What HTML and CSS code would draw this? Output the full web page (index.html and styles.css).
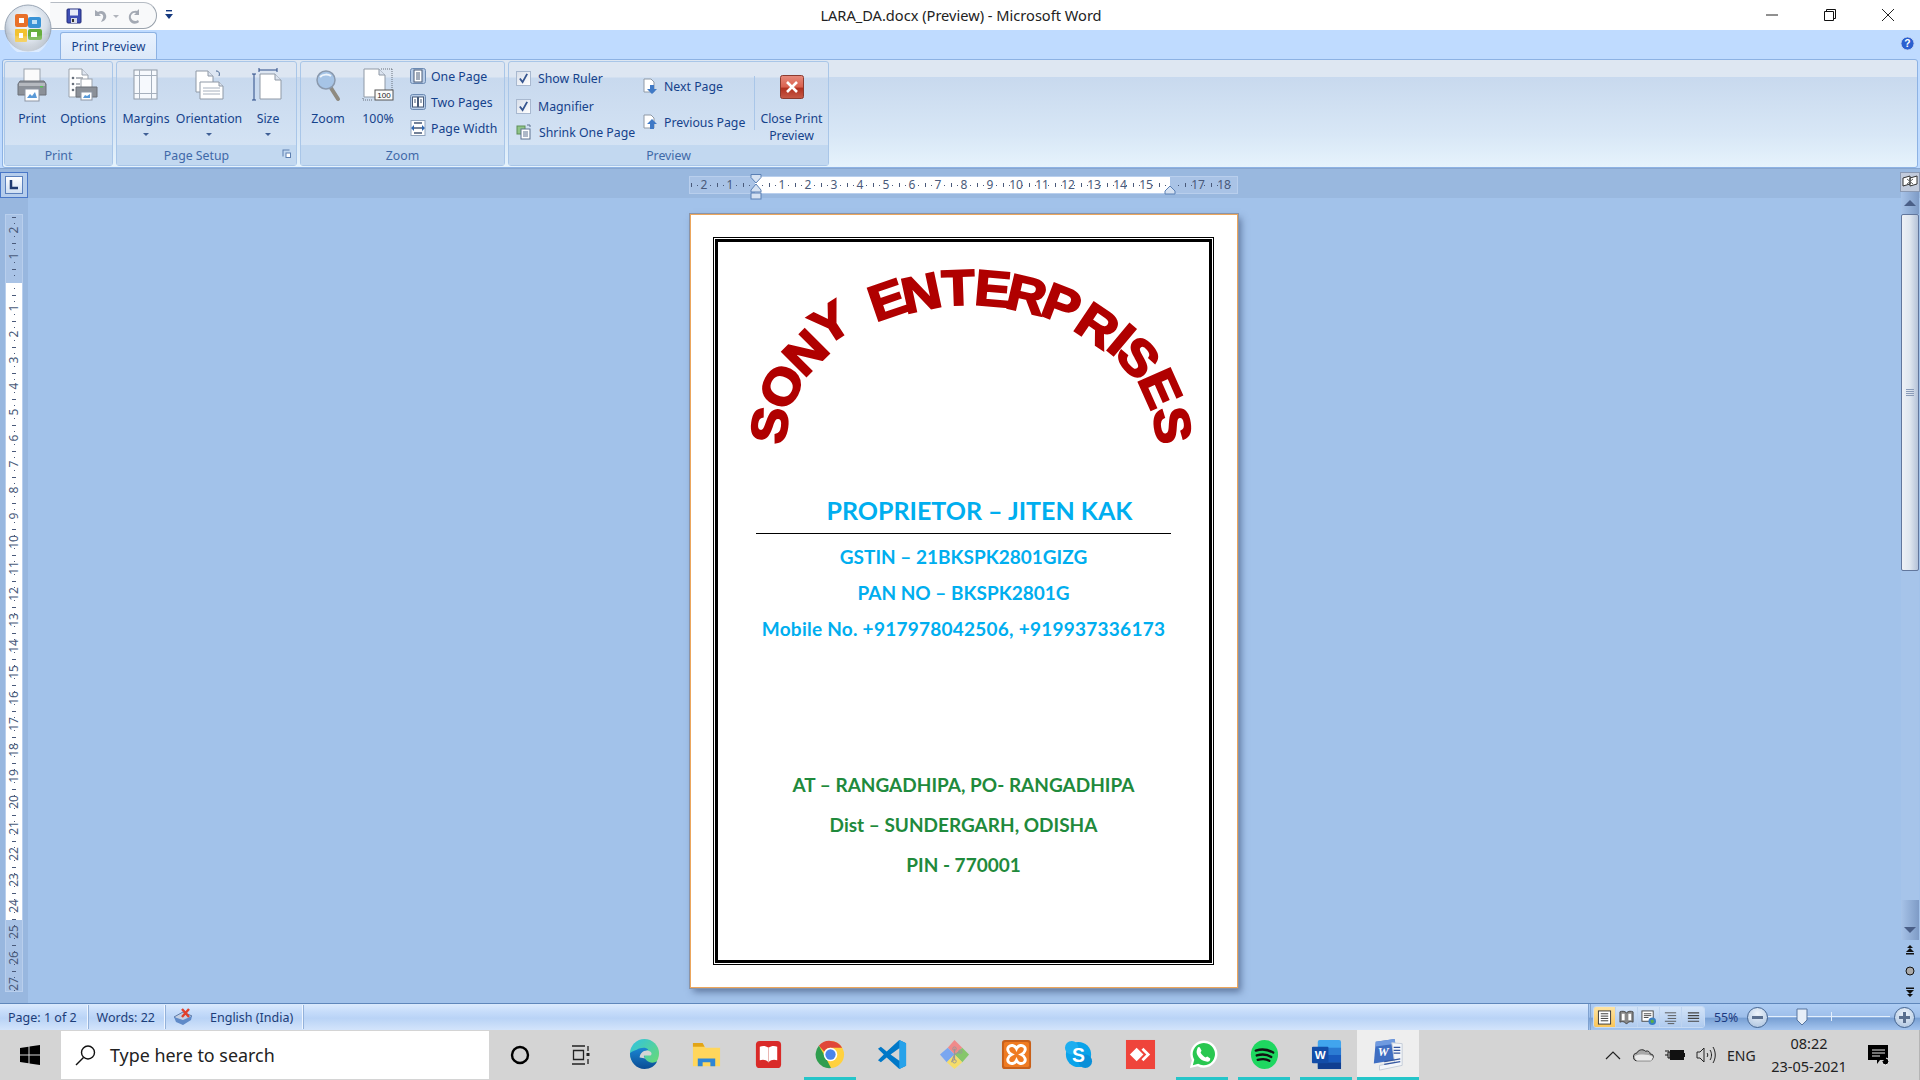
FILE: index.html
```html
<!DOCTYPE html>
<html lang="en">
<head>
<meta charset="utf-8">
<title>LARA_DA.docx (Preview) - Microsoft Word</title>
<link rel="stylesheet" href="styles.css">
</head>
<body>
<header class="titlebar">
  <div class="qat">
    <svg class="ic16" viewBox="0 0 16 16"><rect x="1" y="1" width="14" height="14" rx="1" fill="#3f4fb5" stroke="#232c7a"/><rect x="4" y="1.5" width="8" height="6" fill="#e8ecf8"/><rect x="5" y="10" width="6" height="5" fill="#d8dce8"/><rect x="6" y="11" width="2" height="3" fill="#333"/></svg>
    <svg class="ic16 undo" viewBox="0 0 16 16"><path d="M3 2v6h6L7 6c3-1 5 1 4 4l-2 4c4-1 6-4 5-7-1-4-5-5-8-3z" fill="#a3a9b3"/></svg>
    <span class="qat-drop"></span>
    <svg class="ic16 redo" viewBox="0 0 16 16"><path d="M12 1v6H7l2-2C6 4 3 7 4 10c1 3 5 4 7 2l1 2c-3 3-9 2-10-3C1 6 5 2 10 3z" fill="#a3a9b3"/></svg>
  </div>
  <svg class="qat-custom" viewBox="0 0 8 10"><rect x="1" y="0" width="6" height="1.4" fill="#15397f"/><path d="M0 4h8L4 9z" fill="#15397f"/></svg>
  <div class="doc-title">LARA_DA.docx (Preview) - Microsoft Word</div>
  <div class="winctl">
    <svg class="winbtn" viewBox="0 0 12 12"><path d="M0 6h12" stroke="#222" fill="none"/></svg>
    <svg class="winbtn" viewBox="0 0 12 12"><path d="M.5 2.5h9v9h-9zM2.5 2.5v-2h9v9h-2" stroke="#111" fill="none"/></svg>
    <svg class="winbtn" viewBox="0 0 12 12"><path d="M0 0l12 12M12 0L0 12" stroke="#222" fill="none"/></svg>
  </div>
</header>

<svg class="orb" viewBox="0 0 48 48">
  <defs>
    <radialGradient id="orbg" cx=".5" cy=".35" r=".7"><stop offset="0" stop-color="#fff"/><stop offset=".6" stop-color="#d4dde8"/><stop offset="1" stop-color="#8d99a8"/></radialGradient>
    <linearGradient id="orbgl" x1="0" y1="0" x2="0" y2="1"><stop offset="0" stop-color="#fff" stop-opacity=".1"/><stop offset="1" stop-color="#fff" stop-opacity=".55"/></linearGradient>
  </defs>
  <circle cx="24" cy="24" r="23" fill="url(#orbg)" stroke="#9aa6b5"/>
  <rect x="11" y="10" width="13" height="13" rx="2" fill="#e8702a"/>
  <rect x="24" y="13" width="13" height="11" rx="2" fill="#3a93d6"/>
  <rect x="11" y="25" width="12" height="13" rx="1" fill="#f2c230"/>
  <rect x="24" y="25" width="14" height="11" rx="2" fill="#66ae3d"/>
  <rect x="15" y="14" width="5" height="5" fill="#fff"/><rect x="27" y="28" width="6" height="5" fill="#fff"/><rect x="15" y="29" width="4" height="5" fill="#fff"/><rect x="28" y="16" width="5" height="4" fill="#bfe0f5"/>
  <path d="M3 30a21 21 0 0 0 42 0c-10 3-32 3-42 0z" fill="url(#orbgl)"/>
</svg>

<nav class="tabstrip">
  <div class="tab">Print Preview</div>
  <svg class="help" viewBox="0 0 16 16"><circle cx="8" cy="8" r="7" fill="#2a5fd0" stroke="#c8d8f4"/><text x="8" y="12" class="help-q">?</text></svg>
</nav>

<section class="ribbon">
  <div class="panel">
    <div class="group g-print">
      <div class="gbody">
        <div class="big w50">
          <svg class="ic34" viewBox="0 0 34 34"><rect x="9" y="1" width="16" height="15" fill="#fbfbfb" stroke="#9ba3ad"/><path d="M5 13h24l2 3v11H3V16z" fill="#8b9098" stroke="#6c7078"/><rect x="4" y="15" width="26" height="3" fill="#b5b9bf"/><rect x="10" y="21" width="14" height="12" fill="#fff" stroke="#8d95a3"/><path d="M12 30l3-4 2 2 3-4 2 6z" fill="#5a9ad8"/><rect x="25" y="18" width="3" height="1.500" fill="#57c057"/></svg>
          <span>Print</span>
        </div>
        <div class="big w50 w-options">
          <svg class="ic34" viewBox="0 0 34 34"><path d="M3 1h13l6 6v22H3z" fill="#fff" stroke="#9ba3ad"/><path d="M16 1v6h6" fill="#dfe6f1" stroke="#9ba3ad"/><g fill="#68707c"><circle cx="7" cy="10" r="1.300"/><circle cx="7" cy="16" r="1.300"/><circle cx="7" cy="22" r="1.300"/><rect x="10" y="9.500" width="7" height="1"/><rect x="10" y="15.500" width="4" height="1"/></g><rect x="15" y="11" width="11" height="9" fill="#fff" stroke="#9ba3ad"/><path d="M10 19h21v10H10z" fill="#8b9098" stroke="#6c7078"/><rect x="15" y="24" width="11" height="8" fill="#fff" stroke="#8d95a3"/><path d="M17 30l2-3 2 1 3-2v4z" fill="#5a9ad8"/></svg>
          <span>Options</span>
        </div>
      </div>
      <div class="glabel">Print</div>
    </div>

    <div class="group g-setup">
      <div class="gbody">
        <div class="big w-margins">
          <svg class="ic34" viewBox="0 0 34 34"><rect x="5" y="2" width="23" height="29" fill="#f6f9fd" stroke="#8f99a6"/><path d="M10.500 2v29M22.500 2v29M5 7.500h23M5 25.500h23" stroke="#a6b0bd" fill="none"/></svg>
          <span>Margins</span><i class="caret"></i>
        </div>
        <div class="big w-orient">
          <svg class="ic34" viewBox="0 0 34 34"><path d="M4 3h12l5 5v16H4z" fill="#fff" stroke="#8f99a6"/><path d="M16 3v5h5" fill="#dbe3ef" stroke="#8f99a6"/><path d="M8 14h19l4 4v13H8z" fill="#fff" stroke="#8f99a6"/><path d="M27 14v4h4" fill="#dbe3ef" stroke="#8f99a6"/><path d="M11 20h17M11 23h17M11 26h17" stroke="#a6b0bd"/><path d="M24 3c3 0 4 2 3 5" stroke="#45638f" fill="none"/></svg>
          <span>Orientation</span><i class="caret"></i>
        </div>
        <div class="big w-size">
          <svg class="ic34" viewBox="0 0 34 34"><path d="M8 2h18M8 0v4M26 0v4M3 6v26M1 6h4M1 32h4" stroke="#2b4a86" fill="none"/><path d="M9 6h15l6 6v19H9z" fill="#fff" stroke="#8f99a6"/><path d="M24 6v6h6" fill="#dbe3ef" stroke="#8f99a6"/></svg>
          <span>Size</span><i class="caret"></i>
        </div>
      </div>
      <div class="glabel glabel-setup">Page Setup<svg class="launcher" viewBox="0 0 9 9"><path d="M.5.500h7v1h-6v6h-1z" fill="#5d7fb0"/><rect x="4" y="4" width="4.500" height="4.500" fill="#fff" stroke="#5d7fb0"/></svg></div>
    </div>

    <div class="group g-zoom">
      <div class="gbody">
        <div class="big w-zoom">
          <svg class="ic34" viewBox="0 0 34 34"><path d="M20 20l7 11" stroke="#8e8a80" stroke-width="4" stroke-linecap="round"/><circle cx="15" cy="12" r="9" fill="#a6c4e6" stroke="#8a99ad" stroke-width="1.500"/><path d="M9 9c3-3 8-3 11-1" stroke="#eef5fc" stroke-width="2" fill="none"/></svg>
          <span>Zoom</span>
        </div>
        <div class="big w-100">
          <svg class="ic34" viewBox="0 0 34 34"><path d="M20 1h11M31 1v22M2 30v2h10" stroke="#68707c" stroke-dasharray="1 1" fill="none"/><path d="M3 1h15l6 6v22H3z" fill="#fff" stroke="#8f99a6"/><path d="M18 1v6h6" fill="#dbe3ef" stroke="#8f99a6"/><rect x="14" y="22" width="18" height="10" fill="#fbfbfb" stroke="#555"/><text x="23" y="30" class="hundred">100</text></svg>
          <span>100%</span>
        </div>
        <div class="smallcol">
          <div class="small"><svg class="ic16" viewBox="0 0 16 16"><rect x=".5" y=".5" width="15" height="15" rx="2" fill="#b6cbe6" stroke="#6c8ab3"/><rect x="4" y="2" width="8" height="12" fill="#fff" stroke="#475a78"/><path d="M6 5h4M6 7h4M6 9h4M6 11h4" stroke="#475a78"/></svg><span>One Page</span></div>
          <div class="small"><svg class="ic16" viewBox="0 0 16 16"><rect x=".5" y=".5" width="15" height="15" rx="2" fill="#b6cbe6" stroke="#6c8ab3"/><rect x="2.500" y="3" width="5" height="10" fill="#fff" stroke="#475a78"/><rect x="8.500" y="3" width="5" height="10" fill="#fff" stroke="#475a78"/><path d="M4 6h2M4 8h2M10 6h2M10 8h2" stroke="#475a78"/></svg><span>Two Pages</span></div>
          <div class="small"><svg class="ic16" viewBox="0 0 16 16"><rect x="1" y=".5" width="14" height="15" fill="#fff" stroke="#8fa3bd"/><path d="M4 3h8M4 13h8M4 8h8" stroke="#475a78" stroke-width="1.500"/><path d="M1 8l3-3v6zM15 8l-3-3v6z" fill="#2f66b0"/></svg><span>Page Width</span></div>
        </div>
      </div>
      <div class="glabel">Zoom</div>
    </div>

    <div class="group g-preview">
      <div class="gbody">
        <div class="checks">
          <div class="chk"><span class="box"><svg viewBox="0 0 12 12"><path d="M2 6l3 4 5-9" stroke="#36558f" stroke-width="2" fill="none"/></svg></span><span>Show Ruler</span></div>
          <div class="chk"><span class="box"><svg viewBox="0 0 12 12"><path d="M2 6l3 4 5-9" stroke="#36558f" stroke-width="2" fill="none"/></svg></span><span>Magnifier</span></div>
          <div class="chk shrink"><svg class="ic16" viewBox="0 0 16 16"><rect x="1" y="2" width="8" height="8" fill="#8fc486" stroke="#5e8d58"/><rect x="5" y="5" width="9" height="10" fill="#fff" stroke="#5f7390"/><path d="M7 8h5M7 10h5M7 12h5" stroke="#5f7390"/><path d="M11 1h3v2" stroke="#5f7390" fill="none"/></svg><span>Shrink One Page</span></div>
        </div>
        <div class="pager">
          <div class="small"><svg class="ic16" viewBox="0 0 16 16"><path d="M2 1h7l3 3v10H2z" fill="#fff" stroke="#8f99a6"/><path d="M8 7h4v4h3l-5 5-5-5h3z" fill="#3f79c6"/></svg><span>Next Page</span></div>
          <div class="small"><svg class="ic16" viewBox="0 0 16 16"><path d="M2 1h7l3 3v10H2z" fill="#fff" stroke="#8f99a6"/><path d="M10 5l5 5h-3v5H8v-5H5z" fill="#3f79c6"/></svg><span>Previous Page</span></div>
        </div>
        <div class="close">
          <svg class="closeic" viewBox="0 0 24 24"><defs><linearGradient id="cl" x1="0" y1="0" x2="0" y2="1"><stop offset="0" stop-color="#e68a7c"/><stop offset=".5" stop-color="#d9614f"/><stop offset=".55" stop-color="#b1301f"/><stop offset="1" stop-color="#c65a47"/></linearGradient></defs><rect x=".5" y=".5" width="23" height="23" rx="2" fill="url(#cl)" stroke="#8a3b30"/><path d="M7 7l10 10M17 7L7 17" stroke="#fff" stroke-width="2.600"/></svg>
          <span>Close Print<br>Preview</span>
        </div>
      </div>
      <div class="glabel">Preview</div>
    </div>
  </div>
</section>

<main class="workspace">
  <div class="topband">
    <div class="tabstop"><div class="tabstop-in"><svg viewBox="0 0 12 12"><path d="M3 1v8h7" stroke="#1e3a70" stroke-width="2.500" fill="none"/></svg></div></div>
    <div class="hruler-wrap">
      <div class="hruler">
        <span>2</span><span>1</span><span></span><span>1</span><span>2</span><span>3</span><span>4</span><span>5</span><span>6</span><span>7</span><span>8</span><span>9</span><span>10</span><span>11</span><span>12</span><span>13</span><span>14</span><span>15</span><span></span><span>17</span><span>18</span>
        <svg class="marker-l" viewBox="0 0 12 26"><path d="M1 .5h10v3L6 9 1 3.500zM6 10l5 6v2H1v-2z" fill="#d6e2f2" stroke="#5a80b5"/><rect x="1" y="19" width="10" height="6" fill="#d6e2f2" stroke="#5a80b5"/></svg>
        <svg class="marker-r" viewBox="0 0 12 10"><path d="M6 1l5 5v3H1V6z" fill="#d6e2f2" stroke="#5a80b5"/></svg>
      </div>
    </div>
    <svg class="rulerview" viewBox="0 0 20 20"><rect x=".5" y=".5" width="19" height="19" fill="#c2cbdc" stroke="#8a99b3"/><path d="M3 6l7-2v8l-7 2zM10 6l7-2v8l-7 2z" fill="#fff" stroke="#333"/><path d="M7 7l6 5M13 7l-6 5" stroke="#666"/></svg>
  </div>
  <div class="midrow">
    <div class="leftcol">
      <div class="vruler">
        <span><b>2</b></span><span><b>1</b></span><span></span><span><b>1</b></span><span><b>2</b></span><span><b>3</b></span><span><b>4</b></span><span><b>5</b></span><span><b>6</b></span><span><b>7</b></span><span><b>8</b></span><span><b>9</b></span><span><b>10</b></span><span><b>11</b></span><span><b>12</b></span><span><b>13</b></span><span><b>14</b></span><span><b>15</b></span><span><b>16</b></span><span><b>17</b></span><span><b>18</b></span><span><b>19</b></span><span><b>20</b></span><span><b>21</b></span><span><b>22</b></span><span><b>23</b></span><span><b>24</b></span><span><b>25</b></span><span><b>26</b></span><span><b>27</b></span>
      </div>
    </div>
    <div class="docarea">
      <article class="page">
        <div class="frame"><div class="frame-in">
          <svg class="wordart" viewBox="716 242 491 248">
            <text class="wa" transform="translate(767 425) rotate(-82) scale(1.08 1)" y="18">S</text>
            <text class="wa" transform="translate(779 386) rotate(-62) scale(1.08 1)" y="18">O</text>
            <text class="wa" transform="translate(803 352) rotate(-45) scale(1.08 1)" y="18">N</text>
            <text class="wa" transform="translate(828 322) rotate(-33) scale(1.08 1)" y="18">Y</text>
            <text class="wa" transform="translate(885 299) rotate(-19) scale(1.08 1)" y="18">E</text>
            <text class="wa" transform="translate(919 292) rotate(-12) scale(1.08 1)" y="18">N</text>
            <text class="wa" transform="translate(956 287) rotate(-2) scale(1.08 1)" y="18">T</text>
            <text class="wa" transform="translate(991 288) rotate(5) scale(1.08 1)" y="18">E</text>
            <text class="wa" transform="translate(1025 294) rotate(13) scale(1.08 1)" y="18">R</text>
            <text class="wa" transform="translate(1060 304) rotate(21) scale(1.08 1)" y="18">P</text>
            <text class="wa" transform="translate(1096 325) rotate(34) scale(1.08 1)" y="18">R</text>
            <text class="wa" transform="translate(1120 339) rotate(40) scale(1.08 1)" y="18">I</text>
            <text class="wa" transform="translate(1137 357) rotate(49) scale(1.08 1)" y="18">S</text>
            <text class="wa" transform="translate(1159 388) rotate(66) scale(1.08 1)" y="18">E</text>
            <text class="wa" transform="translate(1171 425) rotate(82) scale(1.08 1)" y="18">S</text>
          </svg>
          <h1 class="prop">PROPRIETOR – JITEN KAK</h1>
          <div class="rule"></div>
          <p class="cyan">GSTIN – 21BKSPK2801GIZG</p>
          <p class="cyan">PAN NO – BKSPK2801G</p>
          <p class="cyan cyan-wide">Mobile No. +917978042506, +919937336173</p>
          <div class="green-block">
            <p class="green">AT – RANGADHIPA, PO- RANGADHIPA</p>
            <p class="green">Dist – SUNDERGARH, ODISHA</p>
            <p class="green">PIN - 770001</p>
          </div>
        </div></div>
      </article>
    </div>
    <div class="scrollbar">
      <div class="sb-btn sb-up"><i class="tri-up"></i></div>
      <div class="sb-thumb"><i></i></div>
      <div class="sb-track"></div>
      <div class="sb-btn sb-down"><i class="tri-down"></i></div>
      <div class="sb-nav">
        <svg viewBox="0 0 10 10"><path d="M5 0l3 3H2zM5 3l4 4H1zM1 8h8v1.500H1z" fill="#111"/></svg>
        <svg viewBox="0 0 10 10"><circle cx="5" cy="5" r="4" fill="#aaa" stroke="#111"/></svg>
        <svg viewBox="0 0 10 10"><path d="M1 .5h8V2H1zM1 3h8L5 7zM2 7h6l-3 3z" fill="#111"/></svg>
      </div>
    </div>
  </div>
</main>

<footer class="statusbar">
  <div class="st-left">
    <span class="st">Page: 1 of 2</span>
    <span class="st">Words: 22</span>
    <span class="st st-lang">
      <svg class="proof" viewBox="0 0 22 18"><path d="M2 9l9-5 9 4-9 8z" fill="#c4cfe2" stroke="#5f7ba8"/><path d="M2 9l9 3 9-4-1 4-8 5-7-3z" fill="#5f8ac8"/><path d="M10 1l7 8M17 1l-7 8" stroke="#e0402a" stroke-width="2.400"/></svg>
      <span>English (India)</span>
    </span>
  </div>
  <div class="st-right">
    <div class="views">
      <span class="vb on"><svg viewBox="0 0 16 16"><rect x="1.500" y="1" width="13" height="14" fill="#fff" stroke="#333"/><path d="M4 4h8M4 6.500h8M4 9h8M4 11.500h8" stroke="#333"/></svg></span>
      <span class="vb"><svg viewBox="0 0 16 16"><path d="M8 3C6 1 3 1 1 2v11c2-1 5-1 7 2 2-3 5-3 7-2V2c-2-1-5-1-7 1z" fill="#888" stroke="#444"/><path d="M3 4h3v7H3zM10 4h3v7h-3z" fill="#fff"/></svg></span>
      <span class="vb"><svg viewBox="0 0 16 16"><rect x="1" y="1" width="12" height="11" fill="#fff" stroke="#444"/><path d="M3 4h8M3 6h8M3 8h5" stroke="#444"/><circle cx="12" cy="12" r="4" fill="#3b7fc4"/><path d="M10 11l3-1 1 3-3 1z" fill="#5cae45"/></svg></span>
      <span class="vb"><svg viewBox="0 0 16 16"><path d="M2 3h12M5 6h9M5 9h9M2 12h12M5 14.500h7" stroke="#555" fill="none"/></svg></span>
      <span class="vb"><svg viewBox="0 0 16 16"><path d="M2 3h12M2 6h12M2 9h12M2 12h12" stroke="#444" stroke-width="1.300" fill="none"/></svg></span>
    </div>
    <span class="pct">55%</span>
    <span class="zbtn"><i class="zminus"></i></span>
    <div class="slider"><i class="midtick"></i><svg class="thumb" viewBox="0 0 12 18"><path d="M1 1h10v11l-5 5-5-5z" fill="#e6eef8" stroke="#56759f"/></svg></div>
    <span class="zbtn"><i class="zminus"></i><i class="zplus"></i></span>
  </div>
</footer>

<footer class="taskbar">
  <div class="startbtn"><svg class="win" viewBox="0 0 20 20"><path d="M0 3l8.500-1.200V9.500H0zM9.500 1.600L20 0v9.500H9.500zM0 10.500h8.500v7.700L0 17zM9.500 10.500H20V20L9.500 18.400z" fill="#000"/></svg></div>
  <div class="search">
    <svg class="searchic" viewBox="0 0 22 22"><circle cx="13" cy="8.500" r="6.500" fill="none" stroke="#111" stroke-width="1.400"/><path d="M8.500 13.500L1 21" stroke="#111" stroke-width="1.400"/></svg>
    <span>Type here to search</span>
  </div>
  <div class="cell"><svg class="i20" viewBox="0 0 20 20"><circle cx="10" cy="10" r="8" fill="none" stroke="#000" stroke-width="2.400"/></svg></div>
  <div class="cell cell-tv"><svg class="i20" viewBox="0 0 20 20"><path d="M2 1h13M2 19h13M3.500 5.500h10v9h-10z" stroke="#222" fill="none" stroke-width="1.300"/><path d="M18 1v5M18 14v5" stroke="#222" stroke-width="1.300"/><rect x="16.500" y="8" width="3" height="3" fill="#222"/></svg></div>

  <div class="cell"><svg class="i32" viewBox="0 0 32 32"><defs><linearGradient id="edge1" x1="0" y1="0" x2="1" y2="1"><stop offset="0" stop-color="#2fc2e3"/><stop offset="1" stop-color="#6fdd68"/></linearGradient><linearGradient id="edge2" x1="0" y1="0" x2="0" y2="1"><stop offset="0" stop-color="#1a86d2"/><stop offset="1" stop-color="#0b4c94"/></linearGradient></defs><circle cx="16" cy="15" r="15" fill="url(#edge1)"/><path d="M1 15c0 9 7 16 15 16 6 0 11-3 13-8-3 2-8 2-11-1-2-2-3-4-2-7 1-3 4-4 4-4-3-3-8-2-12 0-4 1-7 3-7 4z" fill="url(#edge2)"/><path d="M11 19c0-4 4-8 9-7 4 1 4 4 2 5h-6c-1 0-1 2 1 3z" fill="#d4d4d4"/></svg></div>
  <div class="cell"><svg class="i32" viewBox="0 0 32 32"><path d="M2 5h10l3 4h15v19H2z" fill="#ffd65c"/><path d="M2 4h10l2 4H2z" fill="#e2a416"/><path d="M7 28v-8h18v8h-5v-4h-8v4z" fill="#2e86d6"/></svg></div>
  <div class="cell"><svg class="i32" viewBox="0 0 32 32"><rect x="3" y="2" width="26" height="28" rx="4" fill="#d92a28"/><path d="M16 9c-3-2-6-2-9-1v14c3-1 6-1 9 2 3-3 6-3 9-2V8c-3-1-6-1-9 1z" fill="#fff"/><path d="M16 9v15" stroke="#e8b4b0"/></svg></div>
  <div class="cell cell-on"><svg class="i32" viewBox="0 0 32 32"><circle cx="16" cy="16" r="14" fill="#ffd13e"/><path d="M16 2a14 14 0 0 1 12 7H16a7 7 0 0 0-6.500 4L4 7a14 14 0 0 1 12-5z" fill="#e0463a"/><path d="M4 7l6.500 11L16.500 30A14 14 0 0 1 4 7z" fill="#2f9e4f"/><circle cx="16" cy="16" r="7" fill="#fff"/><circle cx="16" cy="16" r="5.300" fill="#4b84ea"/></svg></div>
  <div class="cell"><svg class="i32" viewBox="0 0 32 32"><path d="M23 1l7 3.500v23L23 31 10 19l-6 5-3-2 6-6-6-6 3-2 6 5z" fill="#0078c8"/><path d="M23 1l7 3.500v23L23 31z" fill="#27a2ea"/><path d="M23 9.500L14 16l9 6.500z" fill="#d4d4d4"/></svg></div>
  <div class="cell"><svg class="i32" viewBox="0 0 32 32"><path d="M16 1l8 8-8 7-7-7z" fill="#f08a8a"/><path d="M24 9l7 7-7 8-8-8z" fill="#86c66a"/><path d="M9 9l7 7-8 8-7-8z" fill="#7aa6f0"/><path d="M8 24l8-8 8 8-8 7z" fill="#f5dd6a"/><path d="M16 10v12M16 16l6-3M16 16l-3 8" stroke="#999" fill="none" stroke-width="1.200"/><circle cx="16" cy="10" r="1.800" fill="none" stroke="#999"/><circle cx="22" cy="13" r="1.800" fill="none" stroke="#999"/><circle cx="16" cy="23" r="1.800" fill="none" stroke="#999"/></svg></div>
  <div class="cell"><svg class="i32" viewBox="0 0 32 32"><rect x="1" y="1" width="30" height="30" rx="3" fill="#c8601a"/><rect x="3" y="3" width="26" height="26" rx="2" fill="#ef7b22"/><path d="M8 8c2-2 6-2 8 2 2-4 6-4 8-2s1 6-3 8c4 2 5 6 3 8s-6 2-8-2c-2 4-6 4-8 2s-1-6 3-8c-4-2-5-6-3-8z" fill="none" stroke="#fff" stroke-width="3"/></svg></div>
  <div class="cell"><svg class="i32" viewBox="0 0 32 32"><circle cx="16" cy="16" r="13" fill="#0aa3ea"/><circle cx="9" cy="9" r="7" fill="#1daef0"/><circle cx="23" cy="23" r="7" fill="#0a8fd8"/><text x="16" y="24" class="skype-s">S</text></svg></div>
  <div class="cell"><svg class="i32" viewBox="0 0 32 32"><rect x="1" y="1" width="30" height="30" fill="#ef443b"/><path d="M12 9l7 7-7 7-7-7z" fill="#fff"/><path d="M19 9l7 7-7 7-2-2 5-5-5-5z" fill="#fff"/></svg></div>
  <div class="cell cell-on"><svg class="i32" viewBox="0 0 32 32"><path d="M3 30l2-8a14 14 0 1 1 6 6z" fill="#fff"/><path d="M6 27l1.500-5.500a11.500 11.500 0 1 1 4 4z" fill="#29c750"/><path d="M11 9c1-1 2-1 3 1l1 2-1 2c1 2 3 4 5 5l2-1 3 2c0 3-2 4-5 3-5-1-10-7-9-11z" fill="#fff"/></svg></div>
  <div class="cell cell-on"><svg class="i32" viewBox="0 0 32 32"><ellipse cx="16" cy="16" rx="14" ry="15" fill="#1ed760"/><path d="M7 12c6-2 13-1 18 2M8 17c5-1.500 11-1 15 1.500M9 21.500c4-1 9-1 12 1" stroke="#111" stroke-width="2.400" fill="none" stroke-linecap="round"/></svg></div>
  <div class="cell cell-on"><svg class="i32" viewBox="0 0 32 32"><rect x="7" y="1" width="24" height="30" rx="2" fill="#41a5ee"/><rect x="7" y="9" width="24" height="7.500" fill="#2b7cd3"/><rect x="7" y="16.500" width="24" height="7.500" fill="#185abd"/><rect x="7" y="24" width="24" height="7" fill="#103f91"/><rect x="1" y="8" width="17" height="17" rx="1" fill="#134da8"/><text x="9.500" y="21" class="word-w">W</text></svg></div>
  <div class="cell cell-on cell-active"><svg class="i36" viewBox="0 0 36 36"><path d="M5 4l20-3 2 22-24 4z" fill="#3f6ec2"/><path d="M5 4l20-3 1 5-21 3z" fill="#6f9ae0"/><text x="13" y="19" class="w07">W</text><path d="M22 5l11 1v23l-24 5v-5l16-3z" fill="#f4f6fa" stroke="#c4ccd8"/><path d="M24 10h7M24 13h7M24 16h7M14 25l17-3M14 28l17-3" stroke="#3557a0" stroke-width="1.300"/></svg></div>

  <div class="tray">
    <svg class="tr16" viewBox="0 0 16 10"><path d="M1 9l7-7 7 7" stroke="#222" fill="none" stroke-width="1.200"/></svg>
    <svg class="tr22" viewBox="0 0 22 14"><path d="M5 13a4 4 0 0 1-1-8c1-3 6-5 9-2 3-1 5 1 5 3 3 0 4 2 3 4-1 2-2 3-3 3z" fill="#a8a8a8" stroke="#222"/><path d="M2 8c5-2 14-2 19 1-1 3-2 4-3 4H5C3 13 2 11 2 8z" fill="#e8e8e8"/></svg>
    <svg class="tr20" viewBox="0 0 20 14"><path d="M0 7h3M3 4h2v6H3zM1 4V2M3 4V2" stroke="#111" fill="none"/><rect x="5.500" y="2.500" width="13" height="9" fill="#111" stroke="#111"/><rect x="18.500" y="5" width="1.500" height="4" fill="#111"/></svg>
    <svg class="tr20 tr-vol" viewBox="0 0 20 18"><path d="M1 6h3l4-4v14l-4-4H1z" fill="none" stroke="#222"/><path d="M11 7c1 1 1 3 0 4M14 4c2 3 2 7 0 10M17 1c3 5 3 11 0 16" fill="none" stroke="#222"/></svg>
    <span class="eng">ENG</span>
    <div class="clock"><span>08:22</span><span>23-05-2021</span></div>
    <svg class="notif" viewBox="0 0 22 22"><path d="M1 1h20v15h-8l-3 4v-4H1z" fill="#000"/><path d="M5 6h13M5 9h13M5 12h8" stroke="#e8e8e8"/><path d="M19 14a3.500 3.500 0 1 1-4 4" stroke="#fff" fill="#000"/></svg>
  </div>
</footer>
</body>
</html>
```
FILE: styles.css
```css
* { box-sizing: border-box; }
html, body { margin: 0; padding: 0; }
body {
  width: 1920px;
  height: 1080px;
  overflow: hidden;
  display: flex;
  flex-direction: column;
  font-family: "Noto Sans", "Open Sans", sans-serif;
  position: relative;
  background: #a2c2ea;
}
svg { display: block; flex: none; }

/* title bar */
.titlebar {
  height: 30px;
  background: #fff;
  display: flex;
  align-items: center;
  flex: none;
  position: relative;
}
.qat {
  width: 107px;
  height: 27px;
  margin: 1px 0 0 50px;
  border: 1px solid #9aa3ad;
  border-left-color: transparent;
  border-top-color: #b6bcc4;
  border-radius: 0 14px 14px 0;
  background: #f8f9fa;
  display: flex;
  align-items: center;
  padding-left: 15px;
}
.ic16 { width: 16px; height: 16px; }
.undo { margin-left: 10px; }
.qat-drop { width: 0; height: 0; border: 3px solid transparent; border-top: 3px solid #b0b4bb; border-bottom: 0; margin: 1px 6px 0 5px; }
.redo { margin-left: 2px; }
.qat-custom { width: 8px; height: 10px; margin: 0 0 0 8px; }
.doc-title {
  position: absolute;
  left: 0;
  right: 0;
  top: 5px;
  padding-left: 2px;
  text-align: center;
  font-size: 14.600px;
  line-height: 20px;
  color: #222;
}
.winctl { margin-left: auto; display: flex; align-items: center; gap: 46px; padding-right: 26px; }
.winbtn { width: 12px; height: 12px; }
.orb { position: absolute; left: 4px; top: 4px; width: 48px; height: 48px; z-index: 3; }

/* tabs */
.tabstrip {
  height: 28px;
  flex: none;
  background: #bfdbff;
  display: flex;
  align-items: flex-end;
  padding-left: 60px;
  position: relative;
}
.tab {
  width: 97px;
  height: 27px;
  border: 1px solid #8db2e3;
  border-bottom: 0;
  border-radius: 3px 3px 0 0;
  background: linear-gradient(#e8f2ff, #dbe8f8);
  color: #15428b;
  font-size: 12px;
  line-height: 28px;
  text-align: center;
  position: relative;
  z-index: 1;
  margin-bottom: -1px;
}
.help { position: absolute; right: 5px; top: 6px; width: 15px; height: 15px; }
.help-q { font: bold 11px "Liberation Sans", sans-serif; fill: #fff; text-anchor: middle; }

/* ribbon */
.ribbon {
  height: 111px;
  flex: none;
  background: #bfdbff;
  padding: 1px 2px 0 2px;
  border-bottom: 1px solid #87a6cf;
}
.panel {
  height: 109px;
  border: 1px solid #8db2e3;
  border-radius: 3px;
  background: linear-gradient(#dee7f2 0, #dee7f2 16%, #c8d9ee 16%, #d8e7f6 70%, #e6f3fc 100%);
  display: flex;
  padding: 1px 0 0 1px;
  gap: 3px;
}
.group {
  height: 105px;
  border: 1px solid #a9c6e8;
  border-radius: 3px;
  display: flex;
  flex-direction: column;
  background: linear-gradient(#dde6f2 0, #dde6f2 15px, #c8d9ee 16px, #d4e3f4 85px);
}
.g-print { width: 109px; }
.g-setup { width: 181px; }
.g-zoom { width: 205px; }
.g-preview { width: 321px; }
.gbody { flex: 1; display: flex; min-height: 0; padding-top: 6px; }
.glabel {
  height: 20px;
  flex: none;
  background: #c2d8f0;
  color: #3f69a8;
  font-size: 12.300px;
  line-height: 22px;
  text-align: center;
  position: relative;
}
.glabel-setup { padding-right: 20px; }
.launcher { position: absolute; right: 5px; top: 4px; width: 9px; height: 9px; }
.big {
  display: flex;
  flex-direction: column;
  align-items: center;
  color: #15428b;
  font-size: 12.300px;
  line-height: 17px;
  flex: none;
  white-space: nowrap;
}
.big > span { margin-top: 8px; }
.ic34 { width: 34px; height: 34px; overflow: visible; }
.caret { width: 0; height: 0; border: 3px solid transparent; border-top: 3px solid #3f5f95; border-bottom: 0; margin-top: 6px; }
.g-print .gbody { padding-left: 2px; }
.w50 { width: 50px; }
.w-options { margin-left: 1px; }
.g-setup .gbody { padding-left: 5px; }
.w-margins { width: 48px; }
.w-orient { width: 66px; margin-left: 6px; }
.w-size { width: 44px; margin-left: 4px; }
.g-zoom .gbody { padding-left: 4px; }
.w-zoom { width: 46px; }
.w-100 { width: 46px; margin-left: 4px; }
.smallcol { display: flex; flex-direction: column; margin-left: 9px; gap: 10px; padding-top: 0; }
.small {
  display: flex;
  align-items: center;
  gap: 5px;
  height: 16px;
  color: #15428b;
  font-size: 12.300px;
  white-space: nowrap;
}
.checks { width: 126px; padding: 2px 0 0 7px; display: flex; flex-direction: column; flex: none; }
.chk {
  display: flex;
  align-items: center;
  gap: 7px;
  height: 16px;
  margin-bottom: 12px;
  color: #15428b;
  font-size: 12.300px;
  white-space: nowrap;
}
.chk.shrink { margin-top: -2px; margin-bottom: 0; }
.box {
  width: 15px;
  height: 15px;
  border: 1px solid #a8b8cf;
  background: linear-gradient(135deg, #d8dfea, #fff);
  padding: 1px;
  flex: none;
}
.box svg { width: 11px; height: 11px; }
.pager {
  width: 119px;
  flex: none;
  padding: 10px 0 0 7px;
  display: flex;
  flex-direction: column;
  gap: 20px;
}
.pager .small { gap: 6px; }
.close {
  border-left: 1px solid #a9c6e8;
  width: 74px;
  flex: none;
  height: 54px;
  margin-top: 8px;
  display: flex;
  flex-direction: column;
  align-items: center;
  color: #15428b;
  font-size: 12.300px;
  line-height: 17px;
  text-align: center;
  position: relative;
}
.closeic { width: 24px; height: 24px; margin-top: -1px; }
.close span { margin-top: 11px; width: 90px; flex: none; }

/* workspace */
.workspace { flex: 1; display: flex; flex-direction: column; min-height: 0; }
.topband {
  height: 29px;
  flex: none;
  background: #99b8df;
  display: flex;
  position: relative;
}
.tabstop {
  width: 28px;
  height: 26px;
  margin-top: 3px;
  flex: none;
  border: 1px solid #4a78c8;
  background: #b5cdec;
  padding: 3px 4px;
}
.tabstop-in {
  width: 18px;
  height: 18px;
  border: 1px solid #5a80bd;
  background: linear-gradient(#fff, #cfdff3);
  padding: 2px;
}
.tabstop-in svg { width: 12px; height: 12px; }
.hruler-wrap { flex: 1; display: flex; justify-content: flex-start; padding: 7px 0 0 661px; }
.hruler {
  width: 549px;
  height: 18px;
  display: flex;
  padding-left: 1px;
  border: 1px solid #b9cfed;
  background: linear-gradient(90deg, #a9c3e6 65px, #fff 65px, #fff 480px, #a9c3e6 480px);
  position: relative;
}
.hruler > span {
  width: 26px;
  flex: none;
  text-align: center;
  font-size: 12px;
  line-height: 16px;
  color: #4a5a7a;
  background:
    linear-gradient(#4a5a7a, #4a5a7a) 0 6px / 1px 4px no-repeat,
    linear-gradient(#4a5a7a, #4a5a7a) 6px 8px / 1px 1px no-repeat,
    linear-gradient(#4a5a7a, #4a5a7a) 19px 8px / 1px 1px no-repeat;
}
.marker-l { position: absolute; left: 60px; top: -3px; width: 12px; height: 26px; overflow: visible; }
.marker-r { position: absolute; left: 474px; top: 8px; width: 12px; height: 10px; }
.rulerview { position: absolute; right: 0; top: 3px; width: 20px; height: 20px; z-index: 2; }
.midrow { flex: 1; display: flex; min-height: 0; }
.leftcol { width: 28px; flex: none; background: #98b7df; padding: 16px 0 0 5px; }
.vruler {
  width: 18px;
  height: 778px;
  border: 1px solid #b9cfed;
  overflow: hidden;
  background: linear-gradient(#a9c3e6 68px, #fff 68px, #fff 705px, #a9c3e6 705px);
  padding-top: 2px;
}
.vruler > span {
  display: flex;
  align-items: center;
  justify-content: center;
  height: 26px;
  background:
    linear-gradient(#4a5a7a, #4a5a7a) 6px 0 / 4px 1px no-repeat,
    linear-gradient(#4a5a7a, #4a5a7a) 8px 6px / 1px 1px no-repeat,
    linear-gradient(#4a5a7a, #4a5a7a) 8px 19px / 1px 1px no-repeat;
}
.vruler b {
  font-weight: 400;
  font-size: 12px;
  line-height: 12px;
  color: #4a5a7a;
  transform: rotate(-90deg);
  white-space: nowrap;
}
.docarea { flex: 1; display: flex; justify-content: center; padding-top: 16px; min-width: 0; }
.page {
  width: 548px;
  height: 774px;
  background: #fff;
  border: 1px solid #eca65c;
  outline: 1px solid #8a94a8;
  outline-offset: 0;
  box-shadow: 3px 4px 7px rgba(40, 60, 100, .55);
  padding: 22px 23px 0 22px;
}
.frame { width: 501px; height: 728px; border: 1px solid #000; padding: 1px; }
.frame-in { height: 100%; border: 3px solid #000; }
.wordart { width: 491px; height: 248px; overflow: visible; }
.wa {
  font: bold 50px "Liberation Sans", Arial, sans-serif;
  fill: #b00000;
  stroke: #b00000;
  stroke-width: 2px;
  text-anchor: middle;
}
.prop {
  margin: 0;
  height: 41px;
  padding-left: 32px;
  text-align: center;
  font: 700 25px/41px Lato, sans-serif;
  color: #00aeef;
  white-space: nowrap;
}
.rule { height: 1px; width: 415px; margin: 2px 0 5px 38px; background: #000; }
.cyan {
  margin: 0;
  height: 36px;
  text-align: center;
  font: 700 19px/36px Lato, sans-serif;
  color: #00aeef;
  white-space: nowrap;
}
.cyan-wide { letter-spacing: .25px; }
.green-block { margin-top: 118px; }
.green {
  margin: 0;
  height: 40px;
  text-align: center;
  font: 700 19px/39px Lato, sans-serif;
  color: #1f8a3c;
  white-space: nowrap;
}

/* scrollbar */
.scrollbar { width: 20px; flex: none; display: flex; flex-direction: column; align-items: center; padding-bottom: 2px; }
.sb-btn {
  width: 18px;
  height: 16px;
  flex: none;
  background: linear-gradient(90deg, #a7c3e8, #7e9bc6);
  display: flex;
  align-items: center;
  justify-content: center;
}
.sb-up { height: 22px; margin-top: -6px; position: relative; }
.tri-up { width: 0; height: 0; border: 6px solid transparent; border-bottom: 6px solid #4a5f87; border-top: 0; }
.tri-down { width: 0; height: 0; border: 6px solid transparent; border-top: 6px solid #4a5f87; border-bottom: 0; }
.sb-thumb {
  width: 18px;
  height: 357px;
  flex: none;
  border: 1px solid #62779d;
  border-radius: 2px;
  background: linear-gradient(90deg, #eef1f6, #dfe6ef 50%, #b4c2d8);
  display: flex;
  align-items: center;
  justify-content: center;
}
.sb-thumb i { width: 8px; height: 7px; background: repeating-linear-gradient(#8a9bb8 0 1px, transparent 1px 2px); }
.sb-track { flex: 1; width: 18px; background: #a6c4ea; }
.sb-down { height: 40px; align-items: flex-end; padding-bottom: 7px; }
.sb-nav { height: 61px; flex: none; display: flex; flex-direction: column; align-items: center; gap: 11px; padding-top: 5px; }
.sb-nav svg { width: 10px; height: 10px; }

/* status bar */
.statusbar {
  height: 27px;
  flex: none;
  border-top: 1px solid #5f87bb;
  display: flex;
  background: linear-gradient(#dbeafd 0, #c6dcfa 30%, #b9d3f6 55%, #d3e4fb 100%);
}
.st-left { flex: 1; display: flex; }
.st {
  height: 24px;
  margin-top: 1px;
  display: flex;
  align-items: center;
  border-right: 1px solid #f0f6ff;
  box-shadow: 1px 0 0 #93b1da;
  padding: 0 10px 0 8px;
  font-size: 12.500px;
  color: #1c3d78;
  white-space: nowrap;
}
.st:nth-child(2) { padding: 0 9px; }
.st-lang { padding: 0 9px 0 7px; gap: 16px; }
.proof { width: 22px; height: 18px; }
.st-right {
  width: 332px;
  flex: none;
  display: flex;
  align-items: center;
  padding-left: 2px;
  border-left: 3px double #7fa2d0;
  background: linear-gradient(#aecdf4 0, #9dbeea 50%, #78a0d4 55%, #a5c5ef 100%);
}
.views { display: flex; height: 22px; flex: none; border: 1px solid #c6daf4; border-radius: 3px; overflow: hidden; }
.vb { width: 22px; flex: none; display: flex; align-items: center; justify-content: center; border-right: 1px solid #bdd3f0; background: linear-gradient(#d2e3f8, #b0cbee); }
.vb:last-child { border-right: 0; }
.vb svg { width: 15px; height: 15px; }
.vb.on { background: linear-gradient(#fde4a4, #fbc659); }
.pct { width: 38px; padding-left: 9px; font-size: 12.300px; color: #1b3a80; flex: none; }
.zbtn {
  width: 21px;
  height: 21px;
  flex: none;
  border-radius: 50%;
  border: 1px solid #45648f;
  background: radial-gradient(circle at 50% 30%, #eef4fb, #a6bfdd);
  margin-left: 4px;
  position: relative;
}
.zminus { position: absolute; left: 4px; right: 4px; top: 8px; height: 3px; background: #5a6f8f; }
.zplus { position: absolute; top: 4px; bottom: 4px; left: 8px; width: 3px; background: #5a6f8f; }
.slider { width: 122px; height: 22px; flex: none; position: relative; background: linear-gradient(#e3effc, #e3effc) 0 10px / 100% 1px no-repeat; }
.midtick { position: absolute; left: 63px; top: 6px; width: 1px; height: 9px; background: #e3effc; }
.thumb { position: absolute; left: 28px; top: 2px; width: 12px; height: 18px; }

/* taskbar */
.taskbar {
  height: 50px;
  flex: none;
  background: #d4d4d4;
  display: flex;
}
.startbtn { width: 61px; display: flex; align-items: center; justify-content: center; padding-right: 1px; flex: none; }
.win { width: 20px; height: 20px; }
.search {
  width: 428px;
  flex: none;
  background: #fff;
  margin: 1px 0;
  display: flex;
  align-items: center;
  padding-left: 14px;
  gap: 13px;
  font-size: 17.900px;
  color: #222;
}
.searchic { width: 22px; height: 22px; }
.cell {
  width: 62px;
  flex: none;
  display: flex;
  align-items: center;
  justify-content: center;
  position: relative;
  padding-bottom: 1px;
}
.cell-tv { padding-right: 4px; }
.cell-on::after {
  content: "";
  position: absolute;
  left: 5px;
  right: 5px;
  bottom: 0;
  height: 3px;
  background: #25c5c9;
}
.cell-active { background: #eeeeee; }
.cell-active::after { left: 0; right: 0; }
.i20 { width: 20px; height: 20px; }
.i32 { width: 31px; height: 31px; }
.i36 { width: 34px; height: 34px; }
.skype-s { font: bold 20px "Liberation Sans", sans-serif; fill: #fff; text-anchor: middle; }
.word-w { font: bold 12px "Liberation Sans", sans-serif; fill: #fff; text-anchor: middle; }
.w07 { font: italic bold 13px "Liberation Serif", serif; fill: #fff; text-anchor: middle; }
.hundred { font: 8px "Liberation Sans", sans-serif; fill: #222; text-anchor: middle; }
.tray { flex: 1; display: flex; align-items: center; padding-left: 186px; border-right: 1px solid #b5b5b5; color: #222; }
.tr16 { width: 16px; height: 10px; }
.tr22 { width: 21px; height: 14px; margin-left: 12px; }
.tr20 { width: 20px; height: 14px; margin-left: 11px; }
.tr-vol { height: 18px; }
.eng { font-size: 14px; margin-left: 11px; width: 30px; }
.clock { width: 80px; margin-left: 12px; display: flex; flex-direction: column; align-items: center; font-size: 14.500px; line-height: 23px; }
.notif { width: 22px; height: 22px; margin-left: 18px; }
```
